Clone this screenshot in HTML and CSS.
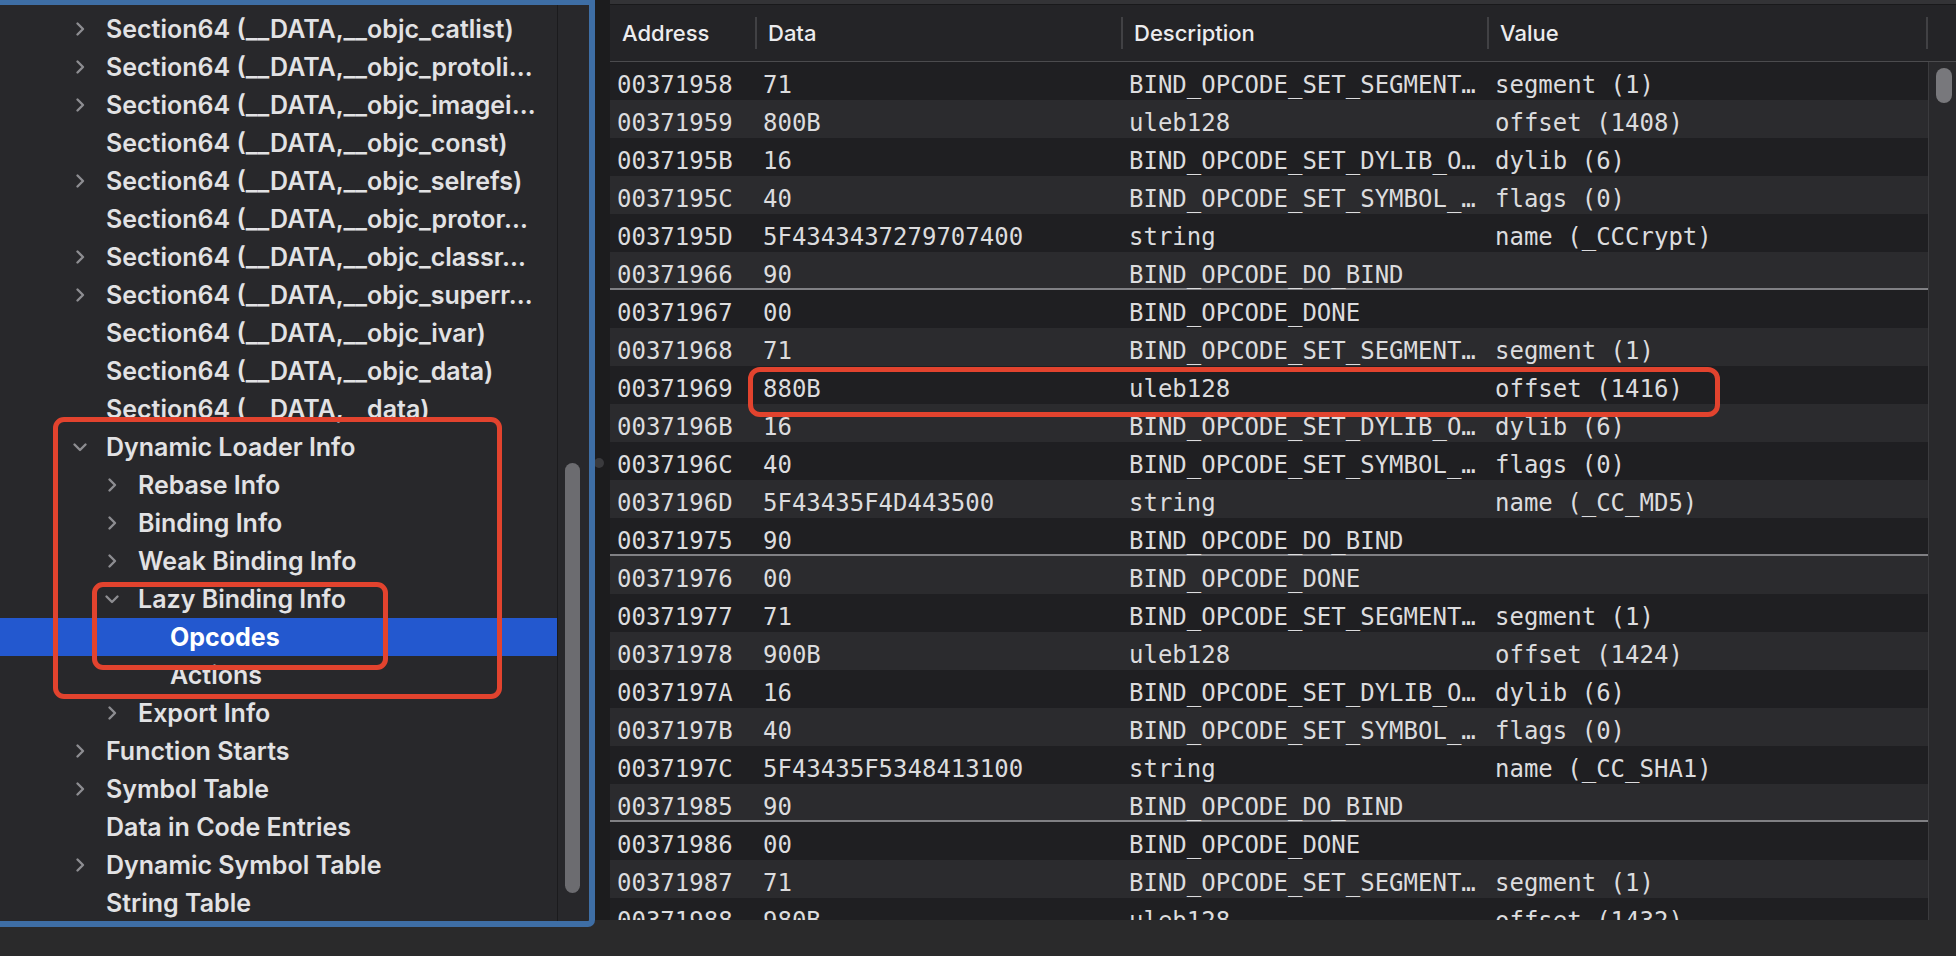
FILE: index.html
```html
<!DOCTYPE html>
<html lang="en">
<head>
<meta charset="utf-8">
<title>MachOView – Lazy Binding Info</title>
<link rel="stylesheet" href="styles.css">
</head>
<body>
<div class="window">
  <aside class="sidebar">
    <div class="tree">
      <div class="row l1"><span class="chev"><svg viewBox="0 0 12 16" width="12" height="16"><path d="M3.5 2.5 L9 8 L3.5 13.5"/></svg></span><span class="label">Section64 (__DATA,__objc_catlist)</span></div>
      <div class="row l1"><span class="chev"><svg viewBox="0 0 12 16" width="12" height="16"><path d="M3.5 2.5 L9 8 L3.5 13.5"/></svg></span><span class="label">Section64 (__DATA,__objc_protoli…</span></div>
      <div class="row l1"><span class="chev"><svg viewBox="0 0 12 16" width="12" height="16"><path d="M3.5 2.5 L9 8 L3.5 13.5"/></svg></span><span class="label">Section64 (__DATA,__objc_imagei…</span></div>
      <div class="row l1"><span class="chev"></span><span class="label">Section64 (__DATA,__objc_const)</span></div>
      <div class="row l1"><span class="chev"><svg viewBox="0 0 12 16" width="12" height="16"><path d="M3.5 2.5 L9 8 L3.5 13.5"/></svg></span><span class="label">Section64 (__DATA,__objc_selrefs)</span></div>
      <div class="row l1"><span class="chev"></span><span class="label">Section64 (__DATA,__objc_protor…</span></div>
      <div class="row l1"><span class="chev"><svg viewBox="0 0 12 16" width="12" height="16"><path d="M3.5 2.5 L9 8 L3.5 13.5"/></svg></span><span class="label">Section64 (__DATA,__objc_classr…</span></div>
      <div class="row l1"><span class="chev"><svg viewBox="0 0 12 16" width="12" height="16"><path d="M3.5 2.5 L9 8 L3.5 13.5"/></svg></span><span class="label">Section64 (__DATA,__objc_superr…</span></div>
      <div class="row l1"><span class="chev"></span><span class="label">Section64 (__DATA,__objc_ivar)</span></div>
      <div class="row l1"><span class="chev"></span><span class="label">Section64 (__DATA,__objc_data)</span></div>
      <div class="row l1"><span class="chev"></span><span class="label">Section64 (__DATA,__data)</span></div>
      <div class="row l1"><span class="chev"><svg viewBox="0 0 16 12" width="16" height="12"><path d="M2.5 3.5 L8 9 L13.5 3.5"/></svg></span><span class="label">Dynamic Loader Info</span></div>
      <div class="row l2"><span class="chev"><svg viewBox="0 0 12 16" width="12" height="16"><path d="M3.5 2.5 L9 8 L3.5 13.5"/></svg></span><span class="label">Rebase Info</span></div>
      <div class="row l2"><span class="chev"><svg viewBox="0 0 12 16" width="12" height="16"><path d="M3.5 2.5 L9 8 L3.5 13.5"/></svg></span><span class="label">Binding Info</span></div>
      <div class="row l2"><span class="chev"><svg viewBox="0 0 12 16" width="12" height="16"><path d="M3.5 2.5 L9 8 L3.5 13.5"/></svg></span><span class="label">Weak Binding Info</span></div>
      <div class="row l2"><span class="chev"><svg viewBox="0 0 16 12" width="16" height="12"><path d="M2.5 3.5 L8 9 L13.5 3.5"/></svg></span><span class="label">Lazy Binding Info</span></div>
      <div class="row l3 selected"><span class="chev"></span><span class="label">Opcodes</span></div>
      <div class="row l3"><span class="chev"></span><span class="label">Actions</span></div>
      <div class="row l2"><span class="chev"><svg viewBox="0 0 12 16" width="12" height="16"><path d="M3.5 2.5 L9 8 L3.5 13.5"/></svg></span><span class="label">Export Info</span></div>
      <div class="row l1"><span class="chev"><svg viewBox="0 0 12 16" width="12" height="16"><path d="M3.5 2.5 L9 8 L3.5 13.5"/></svg></span><span class="label">Function Starts</span></div>
      <div class="row l1"><span class="chev"><svg viewBox="0 0 12 16" width="12" height="16"><path d="M3.5 2.5 L9 8 L3.5 13.5"/></svg></span><span class="label">Symbol Table</span></div>
      <div class="row l1"><span class="chev"></span><span class="label">Data in Code Entries</span></div>
      <div class="row l1"><span class="chev"><svg viewBox="0 0 12 16" width="12" height="16"><path d="M3.5 2.5 L9 8 L3.5 13.5"/></svg></span><span class="label">Dynamic Symbol Table</span></div>
      <div class="row l1"><span class="chev"></span><span class="label">String Table</span></div>
    </div>
    <div class="vscroll"><div class="thumb"></div></div>
    <div class="mark mark-loader"></div>
    <div class="mark mark-lazy"></div>
  </aside>

  <div class="splitter"><span class="grip"></span></div>

  <main class="table-pane">
    <div class="topstrip"></div>
    <div class="thead">
      <div class="th c-addr">Address</div><span class="sep"></span>
      <div class="th c-data">Data</div><span class="sep"></span>
      <div class="th c-desc">Description</div><span class="sep"></span>
      <div class="th c-val">Value</div><span class="sep"></span>
      <div class="th c-fill"></div>
    </div>
    <div class="tbody-wrap">
      <div class="tbody">
        <div class="tr"><span>00371958</span><span>71</span><span>BIND_OPCODE_SET_SEGMENT…</span><span>segment (1)</span></div>
        <div class="tr"><span>00371959</span><span>800B</span><span>uleb128</span><span>offset (1408)</span></div>
        <div class="tr"><span>0037195B</span><span>16</span><span>BIND_OPCODE_SET_DYLIB_O…</span><span>dylib (6)</span></div>
        <div class="tr"><span>0037195C</span><span>40</span><span>BIND_OPCODE_SET_SYMBOL_…</span><span>flags (0)</span></div>
        <div class="tr"><span>0037195D</span><span>5F4343437279707400</span><span>string</span><span>name (_CCCrypt)</span></div>
        <div class="tr end"><span>00371966</span><span>90</span><span>BIND_OPCODE_DO_BIND</span><span></span></div>
        <div class="tr"><span>00371967</span><span>00</span><span>BIND_OPCODE_DONE</span><span></span></div>
        <div class="tr"><span>00371968</span><span>71</span><span>BIND_OPCODE_SET_SEGMENT…</span><span>segment (1)</span></div>
        <div class="tr"><span>00371969</span><span>880B</span><span>uleb128</span><span>offset (1416)</span></div>
        <div class="tr"><span>0037196B</span><span>16</span><span>BIND_OPCODE_SET_DYLIB_O…</span><span>dylib (6)</span></div>
        <div class="tr"><span>0037196C</span><span>40</span><span>BIND_OPCODE_SET_SYMBOL_…</span><span>flags (0)</span></div>
        <div class="tr"><span>0037196D</span><span>5F43435F4D443500</span><span>string</span><span>name (_CC_MD5)</span></div>
        <div class="tr end"><span>00371975</span><span>90</span><span>BIND_OPCODE_DO_BIND</span><span></span></div>
        <div class="tr"><span>00371976</span><span>00</span><span>BIND_OPCODE_DONE</span><span></span></div>
        <div class="tr"><span>00371977</span><span>71</span><span>BIND_OPCODE_SET_SEGMENT…</span><span>segment (1)</span></div>
        <div class="tr"><span>00371978</span><span>900B</span><span>uleb128</span><span>offset (1424)</span></div>
        <div class="tr"><span>0037197A</span><span>16</span><span>BIND_OPCODE_SET_DYLIB_O…</span><span>dylib (6)</span></div>
        <div class="tr"><span>0037197B</span><span>40</span><span>BIND_OPCODE_SET_SYMBOL_…</span><span>flags (0)</span></div>
        <div class="tr"><span>0037197C</span><span>5F43435F5348413100</span><span>string</span><span>name (_CC_SHA1)</span></div>
        <div class="tr end"><span>00371985</span><span>90</span><span>BIND_OPCODE_DO_BIND</span><span></span></div>
        <div class="tr"><span>00371986</span><span>00</span><span>BIND_OPCODE_DONE</span><span></span></div>
        <div class="tr"><span>00371987</span><span>71</span><span>BIND_OPCODE_SET_SEGMENT…</span><span>segment (1)</span></div>
        <div class="tr"><span>00371988</span><span>980B</span><span>uleb128</span><span>offset (1432)</span></div>
      </div>
      <div class="vscroll2"><div class="thumb2"></div></div>
    </div>
    <div class="mark mark-row"></div>
  </main>
</div>
</body>
</html>
```

FILE: styles.css
```css
* { box-sizing: border-box; }

html, body {
  margin: 0;
  padding: 0;
}

body {
  width: 1956px;
  height: 956px;
  overflow: hidden;
  background: #2a2a2b;
  font-family: Inter, "Noto Sans", "Liberation Sans", sans-serif;
}

.window {
  display: flex;
  align-items: flex-start;
  height: 927px;
}

/* ---------- Sidebar (outline view) ---------- */
.sidebar {
  position: relative;
  display: flex;
  width: 595px;
  height: 927px;
  flex: none;
  background: #28282b;
  border-top: 5px solid #3e6ea5;
  border-right: 6px solid #3e6ea5;
  border-bottom: 6px solid #3e6ea5;
  border-bottom-right-radius: 7px;
  overflow: hidden;
}

.tree {
  width: 558px;
  flex: none;
  padding-top: 5px;
  border-right: 1px solid #1b1b1d;
  overflow: hidden;
}

.row {
  display: flex;
  align-items: center;
  height: 38px;
  white-space: nowrap;
  font-size: 25px;
  font-weight: 600;
  color: #e2e2e4;
}

.row.l1 { padding-left: 72px; }
.row.l2 { padding-left: 104px; }
.row.l3 { padding-left: 136px; }

.chev {
  width: 16px;
  height: 38px;
  flex: none;
  display: flex;
  align-items: center;
  justify-content: center;
}

.chev svg path {
  fill: none;
  stroke: #8d8d91;
  stroke-width: 2.4;
  stroke-linecap: round;
  stroke-linejoin: round;
}

.label {
  margin-left: 18px;
}

.row.selected {
  background: #2358cf;
  color: #ffffff;
  font-weight: 700;
}

.vscroll {
  flex: 1;
  padding-left: 7px;
}

.vscroll .thumb {
  width: 15px;
  height: 430px;
  margin-top: 458px;
  border-radius: 8px;
  background: #6c6c70;
}

/* ---------- annotation boxes ---------- */
.mark {
  position: absolute;
  border: 5px solid #e2432e;
  border-radius: 11px;
  pointer-events: none;
}

.mark-loader { left: 53px; top: 412px; width: 449px; height: 282px; }
.mark-lazy   { left: 92px; top: 577px; width: 296px; height: 88px; }
.mark-row    { left: 138px; top: 367px; width: 972px; height: 50px; border-radius: 12px; }

/* ---------- splitter ---------- */
.splitter {
  width: 15px;
  height: 920px;
  flex: none;
  background: #1c1c1e;
  padding-top: 458px;
}

.grip {
  display: block;
  width: 10px;
  height: 10px;
  margin-left: -1px;
  border-radius: 50%;
  background: #3a3a3d;
}

/* ---------- table ---------- */
.table-pane {
  position: relative;
  display: flex;
  flex-direction: column;
  width: 1346px;
  height: 920px;
  flex: none;
  background: #1f1f22;
  overflow: hidden;
}

.topstrip {
  height: 5px;
  flex: none;
  background: #333336;
  border-bottom: 1px solid #19191b;
}

.thead {
  display: flex;
  align-items: center;
  height: 57px;
  flex: none;
  background: #242427;
  border-bottom: 1px solid #4b4b4e;
  font-size: 22px;
  font-weight: 500;
  color: #ececee;
}

.th {
  padding-left: 11px;
  white-space: nowrap;
}

.th.c-addr { width: 145px; padding-left: 12px; }
.th.c-data { width: 364px; }
.th.c-desc { width: 364px; }
.th.c-val  { width: 437px; }
.th.c-fill { flex: 1; }

.sep {
  width: 2px;
  height: 32px;
  flex: none;
  background: #414144;
}

.tbody-wrap {
  display: flex;
  flex: 1;
  overflow: hidden;
}

.tbody {
  width: 1318px;
  flex: none;
}

.tr {
  display: grid;
  grid-template-columns: 146px 366px 366px 1fr;
  height: 38px;
  padding-top: 8px;
  line-height: 30px;
  font-family: "DejaVu Sans Mono", "Liberation Mono", monospace;
  font-size: 24px;
  color: #dcdcde;
  white-space: nowrap;
  background: #1f1f22;
}

.tr:nth-child(even) {
  background: #2b2b2e;
}

.tr span {
  padding-left: 7px;
  overflow: hidden;
}

.tr.end {
  box-shadow: inset 0 -2px 0 #808084;
}

.vscroll2 {
  flex: 1;
  background: #29292c;
  border-left: 1px solid #3b3b3e;
  padding-left: 7px;
}

.thumb2 {
  width: 16px;
  height: 35px;
  margin-top: 6px;
  border-radius: 8px;
  background: #78787c;
}
```
